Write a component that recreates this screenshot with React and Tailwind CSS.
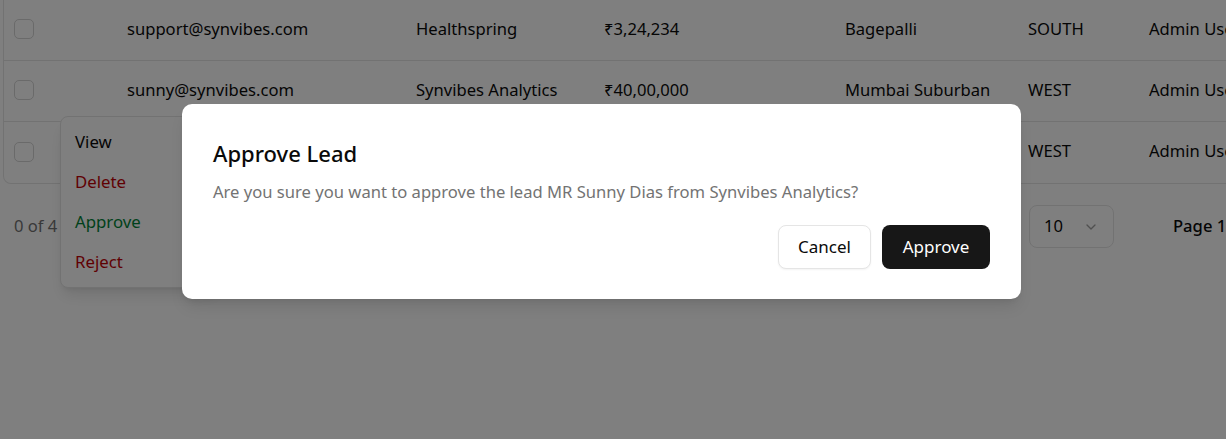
import { ChevronDown } from "lucide-react";

const rows = [
  { email: "support@synvibes.com", company: "Healthspring", amount: "₹3,24,234", city: "Bagepalli", region: "SOUTH", owner: "Admin User" },
  { email: "sunny@synvibes.com", company: "Synvibes Analytics", amount: "₹40,00,000", city: "Mumbai Suburban", region: "WEST", owner: "Admin User" },
  { email: "", company: "", amount: "", city: "", region: "WEST", owner: "Admin User" },
];

function Row({ row, last }) {
  return (
    <div className={`flex items-center h-[61px] pb-[2px] text-[16.6px] text-neutral-950 ${last ? "" : "border-b border-neutral-200"}`}>
      <div className="w-[107px] shrink-0 pl-[10px]">
        <div className="w-[20px] h-[20px] rounded-[5px] border border-neutral-300" />
      </div>
      <div className="w-[289px] shrink-0 pl-4">{row.email}</div>
      <div className="w-[188px] shrink-0 pl-4">{row.company}</div>
      <div className="w-[241px] shrink-0 pl-4">{row.amount}</div>
      <div className="w-[183px] shrink-0 pl-4">{row.city}</div>
      <div className="w-[121px] shrink-0 pl-4">{row.region}</div>
      <div className="w-[200px] shrink-0 pl-4 whitespace-nowrap">{row.owner}</div>
    </div>
  );
}

export default function App() {
  return (
    <div className="relative h-[439px] w-full overflow-hidden bg-white font-['Noto_Sans',sans-serif]">
      {/* Tabla de leads */}
      <div className="ml-[3px] w-[1300px] border-x border-b border-neutral-200 rounded-b-lg">
        {rows.map((row, i) => (
          <Row key={i} row={row} last={i === rows.length - 1} />
        ))}
      </div>

      {/* Paginación */}
      <div className="flex items-center h-[85px] pl-[14px] text-[16.6px]">
        <span className="text-neutral-500 w-[1015px] shrink-0 whitespace-nowrap">0 of 4</span>
        <div className="flex items-center justify-between w-[85px] h-[43px] rounded-lg border border-neutral-200 px-[14px] text-neutral-950 shrink-0">
          <span>10</span>
          <ChevronDown className="w-4 h-4 text-neutral-400" />
        </div>
        <span className="ml-[59px] font-medium text-neutral-950 whitespace-nowrap">Page 1</span>
      </div>

      {/* Menú de acciones */}
      <div className="absolute left-[60px] top-[116px] w-[160px] rounded-lg border border-neutral-200 bg-white shadow-lg py-[5px] text-[16.8px]">
        <div className="h-[40px] flex items-center px-[14px] text-neutral-950">View</div>
        <div className="h-[40px] flex items-center px-[14px] text-red-700">Delete</div>
        <div className="h-[40px] flex items-center px-[14px] text-green-700">Approve</div>
        <div className="h-[40px] flex items-center px-[14px] text-red-700">Reject</div>
      </div>

      {/* Overlay */}
      <div className="absolute inset-0 bg-black/50" />

      {/* Modal */}
      <div className="absolute left-[182px] top-[104px] w-[839px] rounded-[10px] bg-white shadow-lg pt-[31px] pb-[30px] px-[31px]">
        <h2 className="text-[22px] leading-[36px] font-medium text-neutral-950">Approve Lead</h2>
        <p className="mt-[9px] text-[16.6px] leading-[24px] text-neutral-500">
          Are you sure you want to approve the lead MR Sunny Dias from Synvibes Analytics?
        </p>
        <div className="mt-[21px] flex justify-end gap-[11px]">
          <button className="w-[93px] h-[44px] rounded-lg border border-neutral-200 bg-white text-[17px] text-neutral-950 shadow-xs">
            Cancel
          </button>
          <button className="w-[108px] h-[44px] rounded-lg bg-neutral-900 text-[17px] text-white">
            Approve
          </button>
        </div>
      </div>
    </div>
  );
}
